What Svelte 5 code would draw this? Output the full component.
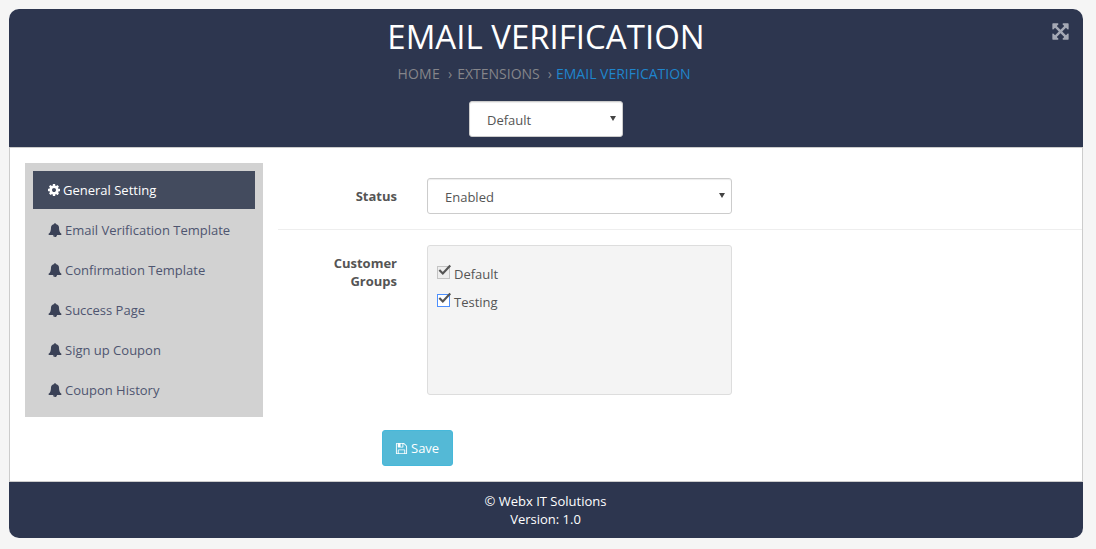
<script>
	const menu = [
		{ label: 'General Setting', icon: 'cog', active: true },
		{ label: 'Email Verification Template', icon: 'bell' },
		{ label: 'Confirmation Template', icon: 'bell' },
		{ label: 'Success Page', icon: 'bell' },
		{ label: 'Sign up Coupon', icon: 'bell' },
		{ label: 'Coupon History', icon: 'bell' }
	];

	const icons = {
		cog: 'M1152 896q0-106-75-181t-181-75-181 75-75 181 75 181 181 75 181-75 75-181zm512-109v222q0 12-8 23t-20 13l-185 28q-19 54-39 91 35 50 107 138 10 12 10 25t-9 23q-27 37-99 108t-94 71q-12 0-26-9l-138-108q-44 23-91 38-16 136-29 186-7 28-36 28h-222q-14 0-24.500-8.500t-11.500-21.500l-28-184q-49-16-90-37l-141 107q-10 9-25 9-14 0-25-11-126-114-165-168-7-10-7-23 0-12 8-23 15-21 51-66.500t54-70.500q-27-50-41-99l-183-27q-13-2-21-12.500t-8-23.500v-222q0-12 8-23t19-13l186-28q14-46 39-92-40-57-107-138-10-12-10-24 0-10 9-23 26-36 98.500-107.500t94.500-71.500q13 0 26 10l138 107q44-23 91-38 16-136 29-186 7-28 36-28h222q14 0 24.500 8.500t11.500 21.500l28 184q49 16 90 37l142-107q9-9 24-9 13 0 25 10 129 119 165 170 7 8 7 22 0 12-8 23-15 21-51 66.500t-54 70.500q26 50 41 98l183 28q13 2 21 12.500t8 23.500z',
		bell: 'M912 1696q0-16-16-16-59 0-101.500-42.500t-42.500-101.500q0-16-16-16t-16 16q0 73 51.500 124.500t124.500 51.500q16 0 16-16zm816-288q0 52-38 90t-90 38h-448q0 106-75 181t-181 75-181-75-75-181h-448q-52 0-90-38t-38-90q50-42 91-88t85-119.500 74.500-158.500 50-206 19.500-260q0-152 117-282.500t307-158.500q-8-19-8-39 0-40 28-68t68-28 68 28 28 68q0 20-8 39 190 28 307 158.500t117 282.500q0 139 19.500 260t50 206 74.500 158.500 85 119.500 91 88z',
		save: 'M512 1536h768v-384h-768v384zm896 0h128v-896q0-14-10-38.500t-20-34.500l-281-281q-10-10-34-20t-39-10v416q0 40-28 68t-68 28h-576q-40 0-68-28t-28-68v-416h-128v1280h128v-416q0-40 28-68t68-28h832q40 0 68 28t28 68v416zm-384-928v-320q0-13-9.500-22.500t-22.500-9.500h-192q-13 0-22.500 9.500t-9.500 22.500v320q0 13 9.500 22.500t22.500 9.500h192q13 0 22.500-9.500t9.500-22.500zm640 32v928q0 40-28 68t-68 28h-1344q-40 0-68-28t-28-68v-1344q0-40 28-68t68-28h928q40 0 88 20t76 48l280 280q28 28 48 76t20 88z',
		expand: 'M1411 541l-355 355 355 355 144-144q29-31 70-14 39 17 39 59v448q0 26-19 45t-45 19h-448q-42 0-59-40-17-39 14-69l144-144-355-355-355 355 144 144q31 30 14 69-17 40-59 40h-448q-26 0-45-19t-19-45v-448q0-42 40-59 39-17 69 14l144 144 355-355-355-355-144 144q-19 19-45 19-12 0-24-5-40-17-40-59v-448q0-26 19-45t45-19h448q42 0 59 40 17 39-14 69l-144 144 355 355 355-355-144-144q-31-30-14-69 17-40 59-40h448q26 0 45 19t19 45v448q0 42-39 59-13 5-25 5-26 0-45-19z'
	};

	const groups = [
		{ name: 'Default', focused: false },
		{ name: 'Testing', focused: true }
	];
</script>

<div class="page">
	<div class="card">
		<header>
			<h1>EMAIL VERIFICATION</h1>
			<div class="crumbs">
				<span>HOME</span><i>›</i><span>EXTENSIONS</span><i>›</i><span class="current">EMAIL VERIFICATION</span>
			</div>
			<div class="select store">
				<span>Default</span>
			</div>
			<svg class="expand" viewBox="0 0 1792 1792"><path d={icons.expand} /></svg>
		</header>

		<div class="body">
			<nav>
				{#each menu as item}
					<div class="item" class:active={item.active}>
						<svg viewBox="0 0 1792 1792"><path d={icons[item.icon]} /></svg>
						{item.label}
					</div>
				{/each}
			</nav>

			<div class="main">
				<div class="row">
					<div class="label">Status</div>
					<div class="select">
						<span>Enabled</span>
					</div>
				</div>
				<div class="row last">
					<div class="label">Customer<br />Groups</div>
					<div class="groups">
						{#each groups as group}
							<div class="group">
								<span class="box" class:focused={group.focused}>
									<svg viewBox="0 0 16 14"><path d="M1.500 7.500 L5.500 11.500 L14 2.500" /></svg>
								</span>
								{group.name}
							</div>
						{/each}
					</div>
				</div>
				<button type="button">
					<svg viewBox="0 0 1792 1792"><path d={icons.save} /></svg>
					Save
				</button>
			</div>
		</div>

		<footer>
			<div>© Webx IT Solutions</div>
			<div>Version: 1.0</div>
		</footer>
	</div>
</div>

<style>
	:global(body) {
		background: #f5f5f5;
		font-family: 'Open Sans', sans-serif;
		font-size: 13px;
		color: #555;
	}

	.page {
		height: 549px;
		padding: 9px 13px 11px 9px;
		box-sizing: border-box;
	}

	.card {
		height: 529px;
		display: flex;
		flex-direction: column;
		border-radius: 10px;
		overflow: hidden;
		background: #fff;
	}

	header {
		position: relative;
		height: 138px;
		background: #2d364f;
		text-align: center;
		flex-shrink: 0;
	}

	h1 {
		margin: 0;
		padding-top: 6px;
		font-size: 33px;
		font-weight: 400;
		line-height: 44px;
		color: #fff;
	}

	.crumbs {
		margin-top: 5px;
		padding-right: 4px;
		font-size: 14px;
		line-height: 20px;
		color: #85858a;
		display: flex;
		justify-content: center;
	}

	.crumbs span:first-child {
		letter-spacing: 0.25px;
	}

	.crumbs i {
		font-style: normal;
		margin: 0 5px 0 8px;
	}

	.crumbs i:nth-of-type(2) {
		margin-right: 4px;
	}

	.crumbs .current {
		color: #1f85cc;
	}

	.select {
		position: relative;
		width: 305px;
		height: 36px;
		box-sizing: border-box;
		border: 1px solid #ccc;
		border-radius: 3px;
		background: #fff;
		padding-left: 17px;
		line-height: 36px;
		text-align: left;
		color: #555;
		box-shadow: inset 0 1px 1px rgba(0, 0, 0, 0.075);
	}

	.select::after {
		content: '';
		position: absolute;
		right: 6px;
		top: 14px;
		border-left: 3px solid transparent;
		border-right: 3px solid transparent;
		border-top: 5px solid #444;
	}

	.store {
		width: 154px;
		margin: 17px auto 0;
	}

	.expand {
		position: absolute;
		top: 13px;
		right: 13px;
		width: 19px;
		height: 19px;
		fill: #a5a9b5;
	}

	.body {
		flex: 1;
		display: flex;
		padding: 15px 0 0 15px;
		border: 1px solid #ccc;
		min-height: 0;
	}

	nav {
		width: 222px;
		height: 238px;
		padding: 8px;
		background: #d2d2d2;
		flex-shrink: 0;
	}

	.item {
		height: 38px;
		margin-bottom: 2px;
		padding-left: 15px;
		display: flex;
		align-items: center;
		gap: 3px;
		color: #4e5570;
	}

	.item svg {
		width: 14px;
		height: 14px;
		fill: #3b4257;
	}

	.item.active {
		padding-left: 14px;
		background: #434b5e;
		color: #fff;
		gap: 2px;
	}

	.item.active svg {
		fill: #fff;
	}

	.main {
		flex: 1;
		margin-left: 15px;
	}

	.row {
		display: flex;
		gap: 30px;
		padding: 15px 0;
		border-bottom: 1px solid #eee;
	}

	.row.last {
		border-bottom: 0;
	}

	.label {
		width: 119px;
		text-align: right;
		font-weight: 700;
		line-height: 18px;
		padding-top: 9px;
	}

	.groups {
		width: 305px;
		height: 150px;
		box-sizing: border-box;
		padding: 14px 9px;
		background: #f4f4f4;
		border: 1px solid #ddd;
		border-radius: 3px;
	}

	.group {
		height: 28px;
		display: flex;
		align-items: center;
		gap: 4px;
	}

	.box {
		position: relative;
		width: 13px;
		height: 13px;
		margin-top: -3px;
		box-sizing: border-box;
		border: 1px solid #c4c4c4;
		background: #eee;
	}

	.box.focused {
		border-color: #4d90fe;
		background: #fff;
	}

	.box svg {
		position: absolute;
		left: 0;
		top: -4px;
		width: 14px;
		height: 13px;
		fill: none;
		stroke: #555;
		stroke-width: 2.500;
	}

	button {
		display: flex;
		align-items: center;
		gap: 3px;
		width: 71px;
		height: 36px;
		margin: 20px 0 0 104px;
		padding: 0 0 0 12px;
		box-sizing: border-box;
		border: 1px solid #46b8da;
		border-radius: 3px;
		background: #54b9d6;
		color: #fff;
		font: inherit;
	}

	button svg {
		width: 13px;
		height: 13px;
		fill: #fff;
	}

	footer {
		height: 56px;
		box-sizing: border-box;
		padding: 10px 1px 0 0;
		background: #2d364f;
		color: #fff;
		text-align: center;
		line-height: 18px;
		flex-shrink: 0;
	}
</style>
